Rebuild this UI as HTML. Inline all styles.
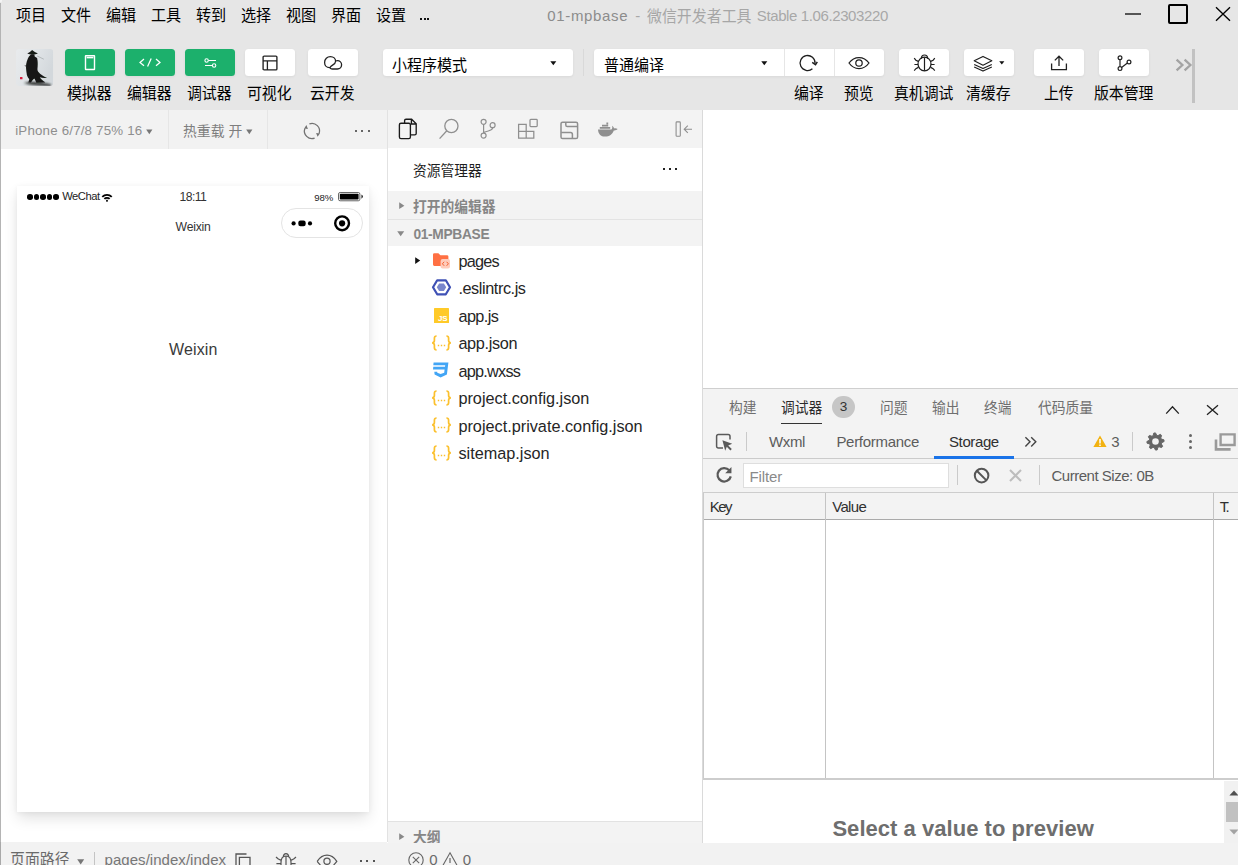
<!DOCTYPE html>
<html lang="zh"><head><meta charset="utf-8"><title>01-mpbase</title>
<style>
html,body{margin:0;padding:0;}
body{width:1238px;height:865px;overflow:hidden;position:relative;background:#fff;font-family:"Liberation Sans",sans-serif;}
.b{position:absolute;box-sizing:border-box;}
.c{position:absolute;display:block;overflow:visible;}
.t{position:absolute;white-space:pre;display:block;}
svg text{font-family:"Liberation Sans","Noto Sans CJK SC",sans-serif;}
</style></head><body>
<div class="b" style="left:0.00px;top:0.00px;width:1238.00px;height:110.00px;background:#e6e6e6;"></div>
<svg class="c" style="left:16.00px;top:7.05px;" width="30.20" height="15.70" viewBox="0 0 1924 1000" fill="#000" role="img" aria-label="项目"><text x="0" y="880" font-size="1000" textLength="1924" lengthAdjust="spacingAndGlyphs">项目</text></svg>
<svg class="c" style="left:61.00px;top:7.05px;" width="30.20" height="15.70" viewBox="0 0 1924 1000" fill="#000" role="img" aria-label="文件"><text x="0" y="880" font-size="1000" textLength="1924" lengthAdjust="spacingAndGlyphs">文件</text></svg>
<svg class="c" style="left:106.00px;top:7.05px;" width="30.20" height="15.70" viewBox="0 0 1924 1000" fill="#000" role="img" aria-label="编辑"><text x="0" y="880" font-size="1000" textLength="1924" lengthAdjust="spacingAndGlyphs">编辑</text></svg>
<svg class="c" style="left:151.00px;top:7.05px;" width="30.20" height="15.70" viewBox="0 0 1924 1000" fill="#000" role="img" aria-label="工具"><text x="0" y="880" font-size="1000" textLength="1924" lengthAdjust="spacingAndGlyphs">工具</text></svg>
<svg class="c" style="left:196.00px;top:7.05px;" width="30.20" height="15.70" viewBox="0 0 1924 1000" fill="#000" role="img" aria-label="转到"><text x="0" y="880" font-size="1000" textLength="1924" lengthAdjust="spacingAndGlyphs">转到</text></svg>
<svg class="c" style="left:241.00px;top:7.05px;" width="30.20" height="15.70" viewBox="0 0 1924 1000" fill="#000" role="img" aria-label="选择"><text x="0" y="880" font-size="1000" textLength="1924" lengthAdjust="spacingAndGlyphs">选择</text></svg>
<svg class="c" style="left:286.00px;top:7.05px;" width="30.20" height="15.70" viewBox="0 0 1924 1000" fill="#000" role="img" aria-label="视图"><text x="0" y="880" font-size="1000" textLength="1924" lengthAdjust="spacingAndGlyphs">视图</text></svg>
<svg class="c" style="left:331.00px;top:7.05px;" width="30.20" height="15.70" viewBox="0 0 1924 1000" fill="#000" role="img" aria-label="界面"><text x="0" y="880" font-size="1000" textLength="1924" lengthAdjust="spacingAndGlyphs">界面</text></svg>
<svg class="c" style="left:376.00px;top:7.05px;" width="30.20" height="15.70" viewBox="0 0 1924 1000" fill="#000" role="img" aria-label="设置"><text x="0" y="880" font-size="1000" textLength="1924" lengthAdjust="spacingAndGlyphs">设置</text></svg>
<div class="b" style="left:419.90px;top:18.30px;width:2.10px;height:2.10px;background:#111;"></div>
<div class="b" style="left:423.60px;top:18.30px;width:2.10px;height:2.10px;background:#111;"></div>
<div class="b" style="left:427.30px;top:18.30px;width:2.10px;height:2.10px;background:#111;"></div>
<span class="t" style="left:547.30px;top:8.00px;font-size:15.00px;line-height:15.00px;color:#8c8c8c;letter-spacing:0.644px;">01-mpbase</span>
<span class="t" style="left:635.30px;top:8.00px;font-size:15.00px;line-height:15.00px;color:#a8a8a8;">-</span>
<svg class="c" style="left:647.30px;top:7.80px;" width="104.51" height="15.60" viewBox="0 0 6699 1000" fill="#a6a6a6" role="img" aria-label="微信开发者工具"><text x="0" y="880" font-size="1000" textLength="6699" lengthAdjust="spacingAndGlyphs">微信开发者工具</text></svg>
<span class="t" style="left:756.80px;top:8.00px;font-size:15.00px;line-height:15.00px;color:#a8a8a8;letter-spacing:-0.387px;">Stable 1.06.2303220</span>
<div class="b" style="left:1125.00px;top:13.00px;width:16.20px;height:1.80px;background:#555;"></div>
<div class="b" style="left:1168.00px;top:4.00px;width:20.20px;height:20.20px;background:transparent;border:2px solid #000;border-radius:2px;"></div>
<svg class="c" style="left:1215.00px;top:6.00px;" width="16" height="16" viewBox="0 0 16 16"><path d="M1 1.2 L15 14.8 M15 1.2 L1 14.8" stroke="#000" stroke-width="1.35" fill="none"/></svg>
<svg class="c" style="left:15.60px;top:49.00px;" width="37.2" height="37" viewBox="0 0 37.2 37">
<defs><linearGradient id="avg" x1="0" y1="0" x2="1" y2="0.4"><stop offset="0" stop-color="#e9ebed"/><stop offset="0.55" stop-color="#dfe3e6"/><stop offset="1" stop-color="#d3d8dc"/></linearGradient>
<filter id="avb" x="-20%" y="-20%" width="140%" height="140%"><feGaussianBlur stdDeviation="0.5"/></filter>
<filter id="avb2" x="-20%" y="-20%" width="140%" height="140%"><feGaussianBlur stdDeviation="0.9"/></filter>
<clipPath id="avc"><rect width="37.2" height="37" rx="3.2"/></clipPath></defs>
<g clip-path="url(#avc)">
<rect width="37.2" height="37" fill="url(#avg)"/>
<path d="M7.8 34 C14 32 23 32.4 34.8 35.2 L35 37.2 C25 36.6 14 36.4 7.8 34 Z" fill="#1a1e1a" opacity="0.85" filter="url(#avb2)"/>
<g filter="url(#avb)">
<path d="M11.3 4.6 Q13.8 3.6 16.1 1 Q18.6 3.4 22 4.4 Q19 5.7 16.6 5.5 Q13.8 5.7 11.3 4.6 Z" fill="#171b17"/>
<path d="M15 5.2 L18.4 5.2 L18.7 7.4 L21.1 8.9 C21.8 12 21.9 15 21.6 18 C21.4 20 21.3 21.6 22.2 22.8 C24.5 25.6 27.5 27.6 31.1 28.9 C28 29.3 25.6 28.9 23.8 28.2 C25.2 30.2 27 31.8 29.4 33.6 L20.4 33.8 C19.6 32 18.9 30.6 18.3 29.6 C17 30.6 15.8 32 15 33.6 L12.3 33.6 C13 31.6 13.2 30.6 13.2 30 C11.6 28.4 10.8 26.4 10.6 24 C10.2 21 10 19 10 18.3 C10 16 10.4 14 10.8 12.6 C11.4 10.6 12.2 9 12.8 7.8 Z" fill="#141814"/>
<path d="M21.2 7 L27.8 10.2" stroke="#8a8f8f" stroke-width="0.5"/>
<path d="M8.8 16 L11 18.6" stroke="#333" stroke-width="0.7"/>
</g>
<rect x="4" y="27.9" width="2.5" height="2.3" rx="0.3" fill="#d81b3c"/>
</g></svg>
<div class="b" style="left:65.00px;top:49.00px;width:50.00px;height:27.00px;background:#1cb06c;border-radius:3.5px;box-shadow:0 1px 3px rgba(0,0,0,0.06);"></div>
<div class="b" style="left:125.00px;top:49.00px;width:50.00px;height:27.00px;background:#1cb06c;border-radius:3.5px;box-shadow:0 1px 3px rgba(0,0,0,0.06);"></div>
<div class="b" style="left:185.00px;top:49.00px;width:50.00px;height:27.00px;background:#1cb06c;border-radius:3.5px;box-shadow:0 1px 3px rgba(0,0,0,0.06);"></div>
<div class="b" style="left:245.00px;top:49.00px;width:50.00px;height:27.00px;background:#fff;border-radius:3.5px;box-shadow:0 1px 3px rgba(0,0,0,0.06);"></div>
<div class="b" style="left:308.00px;top:49.00px;width:50.00px;height:27.00px;background:#fff;border-radius:3.5px;box-shadow:0 1px 3px rgba(0,0,0,0.06);"></div>
<div class="b" style="left:899.00px;top:49.00px;width:50.00px;height:27.00px;background:#fff;border-radius:3.5px;box-shadow:0 1px 3px rgba(0,0,0,0.06);"></div>
<div class="b" style="left:964.00px;top:49.00px;width:50.00px;height:27.00px;background:#fff;border-radius:3.5px;box-shadow:0 1px 3px rgba(0,0,0,0.06);"></div>
<div class="b" style="left:1034.00px;top:49.00px;width:50.00px;height:27.00px;background:#fff;border-radius:3.5px;box-shadow:0 1px 3px rgba(0,0,0,0.06);"></div>
<div class="b" style="left:1099.00px;top:49.00px;width:50.00px;height:27.00px;background:#fff;border-radius:3.5px;box-shadow:0 1px 3px rgba(0,0,0,0.06);"></div>
<div class="b" style="left:383.00px;top:49.00px;width:190.00px;height:27.00px;background:#fff;border-radius:3.5px;box-shadow:0 1px 3px rgba(0,0,0,0.06);"></div>
<div class="b" style="left:594.00px;top:49.00px;width:290.00px;height:27.00px;background:#fff;border-radius:3.5px;box-shadow:0 1px 3px rgba(0,0,0,0.06);"></div>
<div class="b" style="left:784.00px;top:49.00px;width:1.00px;height:27.00px;background:#e6e6e6;"></div>
<div class="b" style="left:834.00px;top:49.00px;width:1.00px;height:27.00px;background:#e6e6e6;"></div>
<div class="b" style="left:583.00px;top:49.00px;width:1.00px;height:27.00px;background:#d9d9d9;"></div>
<svg class="c" style="left:84.00px;top:54.00px;" width="12" height="17" viewBox="0 0 12 17"><rect x="1.5" y="1.7" width="9" height="13.8" rx="0.3" fill="none" stroke="#fff" stroke-width="1.4"/><path d="M2.6 3.6 H9.4" stroke="#fff" stroke-width="1.5"/></svg>
<svg class="c" style="left:138.00px;top:57.00px;" width="24" height="11" viewBox="0 0 24 11"><path d="M6 2 L2 5.4 L6 8.8 M9.6 9.6 L13.2 1.6 M18 2 L22 5.4 L18 8.8" stroke="#fff" stroke-width="1.25" fill="none"/></svg>
<svg class="c" style="left:203.00px;top:57.00px;" width="16" height="12" viewBox="0 0 16 12"><circle cx="3.6" cy="3.5" r="1.7" fill="none" stroke="#fff" stroke-width="1.1"/><path d="M5.4 3.5 H13 M2 8.5 H9.4" stroke="#fff" stroke-width="1.1"/><circle cx="11.1" cy="8.5" r="1.7" fill="none" stroke="#fff" stroke-width="1.1"/></svg>
<svg class="c" style="left:262.00px;top:55.00px;" width="16" height="16" viewBox="0 0 16 16"><rect x="1.1" y="1.1" width="13.8" height="13.8" rx="1" fill="none" stroke="#222" stroke-width="1.35"/><path d="M1 5.8 H15 M5.4 5.8 V15" stroke="#222" stroke-width="1.3"/></svg>
<svg class="c" style="left:323.00px;top:55.00px;" width="20" height="15" viewBox="0 0 20 15"><path d="M6.6 12.6 C3.4 12.6 1.6 10.2 1.6 7.4 C1.6 4 4.2 1.6 7.4 1.6 C10.6 1.6 12.6 3.8 12.6 6.2 C12.6 9.6 8.4 10 7.2 12.2 C6.6 13.4 8.2 14 9.4 14 L14.4 14 C16.8 14 18.6 12.2 18.6 9.8 C18.6 7.6 16.8 5.6 14.4 5.6 C13.8 5.6 13.2 5.8 12.6 6" fill="none" stroke="#222" stroke-width="1.3" stroke-linecap="round"/></svg>
<svg class="c" style="left:392.20px;top:56.80px;" width="75.00" height="15.60" viewBox="0 0 4808 1000" fill="#000" role="img" aria-label="小程序模式"><text x="0" y="880" font-size="1000" textLength="4808" lengthAdjust="spacingAndGlyphs">小程序模式</text></svg>
<svg class="c" style="left:549.60px;top:60.80px;" width="7" height="5" viewBox="0 0 7 5"><path d="M0.3 0.3 H6.3 L3.3 4.3 Z" fill="#111"/></svg>
<svg class="c" style="left:603.80px;top:56.80px;" width="60.00" height="15.60" viewBox="0 0 3846 1000" fill="#000" role="img" aria-label="普通编译"><text x="0" y="880" font-size="1000" textLength="3846" lengthAdjust="spacingAndGlyphs">普通编译</text></svg>
<svg class="c" style="left:761.30px;top:60.80px;" width="7" height="5" viewBox="0 0 7 5"><path d="M0.3 0.3 H6.3 L3.3 4.3 Z" fill="#111"/></svg>
<svg class="c" style="left:799.00px;top:54.00px;" width="20" height="18" viewBox="0 0 20 18"><path d="M13.42 14.75 A7.5 7.5 0 1 1 16.07 9.4" fill="none" stroke="#1e1e1e" stroke-width="1.3"/><path d="M13.2 8.4 L16.5 10.6 L18.3 7.8" fill="none" stroke="#1e1e1e" stroke-width="1.5"/></svg>
<svg class="c" style="left:848.00px;top:56.00px;" width="22" height="14" viewBox="0 0 22 14"><path d="M1 7 C4 2.8 8 1.5 11 1.5 C14 1.5 18 2.8 21 7 C18 11.2 14 12.5 11 12.5 C8 12.5 4 11.2 1 7 Z" fill="none" stroke="#1e1e1e" stroke-width="1.25"/><circle cx="11" cy="7" r="3.2" fill="none" stroke="#1e1e1e" stroke-width="1.25"/></svg>
<svg class="c" style="left:913.00px;top:54.00px;" width="23" height="18" viewBox="0 0 23 18"><ellipse cx="11.5" cy="10" rx="6.5" ry="6.9" fill="none" stroke="#1e1e1e" stroke-width="1.25"/><path d="M11.5 3.4 V16.8 M8.3 4.6 C8.4 2.3 9.8 1 11.5 1 C13.2 1 14.6 2.3 14.7 4.6 M5.3 7.4 L2.9 6.2 L1.2 4.2 M17.7 7.4 L20.1 6.2 L21.8 4.2 M5 10.5 H1.4 M18 10.5 H21.6 M5.3 13.4 L2.9 14.7 L1.2 16.6 M17.7 13.4 L20.1 14.7 L21.8 16.6" fill="none" stroke="#1e1e1e" stroke-width="1.2"/></svg>
<svg class="c" style="left:973.00px;top:55.00px;" width="20" height="17" viewBox="0 0 20 17"><path d="M10 1.4 L18.8 5.8 L10 10.2 L1.2 5.8 Z M1.2 9.4 L10 13.6 L18.8 9.4 M1.2 11.9 L10 16.1 L18.8 11.9" fill="none" stroke="#1e1e1e" stroke-width="1.15" stroke-linejoin="round"/></svg>
<svg class="c" style="left:999.00px;top:60.50px;" width="6" height="4" viewBox="0 0 6 4"><path d="M0.2 0.2 H5.4 L2.8 3.4 Z" fill="#111"/></svg>
<svg class="c" style="left:1050.00px;top:55.00px;" width="18" height="16" viewBox="0 0 18 16"><path d="M9 11 V1.4 M4.8 5.4 L9 1.2 L13.2 5.4 M1.6 8.6 V14.6 H16.4 V8.6" fill="none" stroke="#222" stroke-width="1.3"/></svg>
<svg class="c" style="left:1116.00px;top:55.00px;" width="16" height="17" viewBox="0 0 16 17"><circle cx="4" cy="2.8" r="1.9" fill="none" stroke="#222" stroke-width="1.2"/><circle cx="4" cy="13.6" r="1.9" fill="none" stroke="#222" stroke-width="1.2"/><circle cx="13" cy="7" r="1.9" fill="none" stroke="#222" stroke-width="1.2"/><path d="M4 4.8 V11.6 M5.6 12.4 L11.4 8" fill="none" stroke="#222" stroke-width="1.2"/></svg>
<svg class="c" style="left:1175.00px;top:58.00px;" width="18" height="14" viewBox="0 0 18 14"><path d="M1.6 1.6 L7.4 7 L1.6 12.4 M9.6 1.6 L15.4 7 L9.6 12.4" fill="none" stroke="#a3a3a3" stroke-width="2.3"/></svg>
<div class="b" style="left:1192.00px;top:49.00px;width:2.60px;height:54.00px;background:#c2c2c2;"></div>
<svg class="c" style="left:67.42px;top:85.00px;" width="44.55" height="15.60" viewBox="0 0 2856 1000" fill="#000" role="img" aria-label="模拟器"><text x="0" y="880" font-size="1000" textLength="2856" lengthAdjust="spacingAndGlyphs">模拟器</text></svg>
<svg class="c" style="left:127.42px;top:85.00px;" width="44.55" height="15.60" viewBox="0 0 2856 1000" fill="#000" role="img" aria-label="编辑器"><text x="0" y="880" font-size="1000" textLength="2856" lengthAdjust="spacingAndGlyphs">编辑器</text></svg>
<svg class="c" style="left:187.42px;top:85.00px;" width="44.55" height="15.60" viewBox="0 0 2856 1000" fill="#000" role="img" aria-label="调试器"><text x="0" y="880" font-size="1000" textLength="2856" lengthAdjust="spacingAndGlyphs">调试器</text></svg>
<svg class="c" style="left:247.42px;top:85.00px;" width="44.55" height="15.60" viewBox="0 0 2856 1000" fill="#000" role="img" aria-label="可视化"><text x="0" y="880" font-size="1000" textLength="2856" lengthAdjust="spacingAndGlyphs">可视化</text></svg>
<svg class="c" style="left:310.43px;top:85.00px;" width="44.55" height="15.60" viewBox="0 0 2856 1000" fill="#000" role="img" aria-label="云开发"><text x="0" y="880" font-size="1000" textLength="2856" lengthAdjust="spacingAndGlyphs">云开发</text></svg>
<svg class="c" style="left:793.85px;top:85.00px;" width="29.70" height="15.60" viewBox="0 0 1904 1000" fill="#000" role="img" aria-label="编译"><text x="0" y="880" font-size="1000" textLength="1904" lengthAdjust="spacingAndGlyphs">编译</text></svg>
<svg class="c" style="left:843.85px;top:85.00px;" width="29.70" height="15.60" viewBox="0 0 1904 1000" fill="#000" role="img" aria-label="预览"><text x="0" y="880" font-size="1000" textLength="1904" lengthAdjust="spacingAndGlyphs">预览</text></svg>
<svg class="c" style="left:894.00px;top:85.00px;" width="59.40" height="15.60" viewBox="0 0 3808 1000" fill="#000" role="img" aria-label="真机调试"><text x="0" y="880" font-size="1000" textLength="3808" lengthAdjust="spacingAndGlyphs">真机调试</text></svg>
<svg class="c" style="left:966.43px;top:85.00px;" width="44.55" height="15.60" viewBox="0 0 2856 1000" fill="#000" role="img" aria-label="清缓存"><text x="0" y="880" font-size="1000" textLength="2856" lengthAdjust="spacingAndGlyphs">清缓存</text></svg>
<svg class="c" style="left:1043.85px;top:85.00px;" width="29.70" height="15.60" viewBox="0 0 1904 1000" fill="#000" role="img" aria-label="上传"><text x="0" y="880" font-size="1000" textLength="1904" lengthAdjust="spacingAndGlyphs">上传</text></svg>
<svg class="c" style="left:1094.00px;top:85.00px;" width="59.40" height="15.60" viewBox="0 0 3808 1000" fill="#000" role="img" aria-label="版本管理"><text x="0" y="880" font-size="1000" textLength="3808" lengthAdjust="spacingAndGlyphs">版本管理</text></svg>
<div class="b" style="left:0.00px;top:110.00px;width:387.00px;height:38.50px;background:#f2f2f2;"></div>
<div class="b" style="left:0.00px;top:148.50px;width:387.00px;height:694.00px;background:#fff;"></div>
<div class="b" style="left:0.00px;top:2.00px;width:1.00px;height:863.00px;background:#b4b4b4;"></div>
<div class="b" style="left:0.00px;top:0.00px;width:1.50px;height:2.50px;background:#f4f4f4;border-radius:0 0 2px 0;"></div>
<div class="b" style="left:387.00px;top:110.00px;width:1.00px;height:732.00px;background:#e2e2e2;"></div>
<span class="t" style="left:15.20px;top:124.04px;font-size:13.30px;line-height:13.30px;color:#8e8e8e;letter-spacing:0.195px;">iPhone 6/7/8 75% 16</span>
<svg class="c" style="left:146.00px;top:129.00px;" width="7" height="6" viewBox="0 0 7 6"><path d="M0.2 0.4 H6.4 L3.3 5.2 Z" fill="#777"/></svg>
<div class="b" style="left:168.00px;top:110.00px;width:1.00px;height:38.50px;background:#e6e6e6;"></div>
<svg class="c" style="left:183.00px;top:123.10px;" width="59.26" height="14.20" viewBox="0 0 4173 1000" fill="#7e7e7e" role="img" aria-label="热重载 开"><text x="0" y="880" font-size="1000" textLength="4173" lengthAdjust="spacingAndGlyphs" xml:space="preserve">热重载 开</text></svg>
<svg class="c" style="left:245.80px;top:129.00px;" width="7" height="6" viewBox="0 0 7 6"><path d="M0.2 0.4 H6.4 L3.3 5.2 Z" fill="#777"/></svg>
<div class="b" style="left:267.00px;top:110.00px;width:1.00px;height:38.50px;background:#e6e6e6;"></div>
<svg class="c" style="left:303.00px;top:122.00px;" width="18" height="18" viewBox="0 0 18 18"><path d="M6.4 1.86 A7.6 7.6 0 0 1 16.1 11.6 M11.6 16.14 A7.6 7.6 0 0 1 1.9 6.4" fill="none" stroke="#727272" stroke-width="1.3"/><path d="M13.1 10.9 L14.6 14.8 L16.9 11.4 Z M1.2 6.6 L3.4 3 L4.9 7.1 Z" fill="#727272"/></svg>
<div class="b" style="left:354.60px;top:130.20px;width:2.00px;height:2.00px;background:#666;"></div>
<div class="b" style="left:361.10px;top:130.20px;width:2.00px;height:2.00px;background:#666;"></div>
<div class="b" style="left:367.60px;top:130.20px;width:2.00px;height:2.00px;background:#666;"></div>
<div class="b" style="left:17.00px;top:185.50px;width:352.40px;height:626.20px;background:#fff;box-shadow:0 7px 14px -1px rgba(0,0,0,0.12),0 1px 5px rgba(0,0,0,0.05);"></div>
<div class="b" style="left:27.10px;top:194.20px;width:5.60px;height:5.60px;background:#000;border-radius:50%;"></div>
<div class="b" style="left:33.60px;top:194.20px;width:5.60px;height:5.60px;background:#000;border-radius:50%;"></div>
<div class="b" style="left:40.10px;top:194.20px;width:5.60px;height:5.60px;background:#000;border-radius:50%;"></div>
<div class="b" style="left:46.60px;top:194.20px;width:5.60px;height:5.60px;background:#000;border-radius:50%;"></div>
<div class="b" style="left:53.10px;top:194.20px;width:5.60px;height:5.60px;background:#000;border-radius:50%;"></div>
<span class="t" style="left:62.20px;top:191.12px;font-size:11.20px;line-height:11.20px;color:#222;letter-spacing:-0.451px;">WeChat</span>
<svg class="c" style="left:100.50px;top:192.60px;" width="12" height="9" viewBox="0 0 12 9"><path d="M0.6 3.2 A7.6 7.6 0 0 1 11.4 3.2 L10.1 4.5 A5.8 5.8 0 0 0 1.9 4.5 Z M2.7 5.3 A4.7 4.7 0 0 1 9.3 5.3 L8 6.6 A2.9 2.9 0 0 0 4 6.6 Z M6 6.6 A1.3 1.3 0 0 1 6 9.1 A1.3 1.3 0 0 1 6 6.6 Z" fill="#000"/></svg>
<span class="t" style="left:179.60px;top:190.57px;font-size:12.20px;line-height:12.20px;color:#333;letter-spacing:-0.581px;">18:11</span>
<span class="t" style="left:314.20px;top:192.87px;font-size:9.60px;line-height:9.60px;color:#222;letter-spacing:-0.107px;">98%</span>
<svg class="c" style="left:338.00px;top:191.80px;" width="25" height="9.4" viewBox="0 0 25 9.4"><rect x="0.5" y="0.5" width="21.4" height="8.3" rx="1.6" fill="none" stroke="#555" stroke-width="0.9"/><rect x="1.8" y="1.8" width="18.8" height="5.7" rx="0.8" fill="#000"/><path d="M23.5 2.6 Q26.3 4.65 23.5 6.7 Z" fill="#000"/></svg>
<span class="t" style="left:175.60px;top:220.57px;font-size:12.20px;line-height:12.20px;color:#333;letter-spacing:-0.217px;">Weixin</span>
<div class="b" style="left:280.60px;top:208.20px;width:82.20px;height:30.20px;background:#fff;border:1px solid #e4e4e4;border-radius:16px;"></div>
<svg class="c" style="left:290.00px;top:218.00px;" width="24" height="11" viewBox="0 0 24 11"><circle cx="3.6" cy="5.4" r="2.1" fill="#000"/><rect x="8.3" y="2.6" width="7.4" height="5.6" rx="2.2" fill="#000"/><circle cx="20" cy="5.4" r="2.1" fill="#000"/></svg>
<svg class="c" style="left:333.00px;top:214.00px;" width="18" height="18" viewBox="0 0 18 18"><circle cx="9.1" cy="9.3" r="6.9" fill="none" stroke="#000" stroke-width="2.4"/><circle cx="9.1" cy="9.3" r="3.1" fill="#000"/></svg>
<span class="t" style="left:168.90px;top:342.46px;font-size:16.00px;line-height:16.00px;color:#3a3a3a;letter-spacing:0.176px;">Weixin</span>
<div class="b" style="left:388.00px;top:110.00px;width:314.00px;height:38.00px;background:#f3f3f3;"></div>
<div class="b" style="left:388.00px;top:148.00px;width:314.00px;height:673.00px;background:#fff;"></div>
<div class="b" style="left:702.00px;top:110.00px;width:1.00px;height:733.00px;background:#dadada;"></div>
<svg class="c" style="left:398.00px;top:118.00px;" width="20" height="22" viewBox="0 0 20 22"><path d="M6.6 5.2 V2.6 Q6.6 1.2 8 1.2 H13.6 L18.2 5.8 V15.4 Q18.2 16.8 16.8 16.8 H12.4 M13.4 1.4 V6 H18" fill="none" stroke="#1a1a1a" stroke-width="1.35"/><rect x="1.4" y="5.2" width="11" height="15.4" rx="1.6" fill="none" stroke="#1a1a1a" stroke-width="1.35"/></svg>
<svg class="c" style="left:438.00px;top:118.00px;" width="22" height="22" viewBox="0 0 22 22"><circle cx="13.4" cy="8" r="6.6" fill="none" stroke="#8f8f8f" stroke-width="1.3"/><path d="M8.8 12.8 L1.6 20.6" stroke="#8f8f8f" stroke-width="1.3"/></svg>
<svg class="c" style="left:479.00px;top:118.00px;" width="18" height="22" viewBox="0 0 18 22"><circle cx="4.6" cy="3.8" r="2.5" fill="none" stroke="#8f8f8f" stroke-width="1.2"/><circle cx="4.6" cy="17.6" r="2.5" fill="none" stroke="#8f8f8f" stroke-width="1.2"/><circle cx="13.6" cy="7.2" r="2.5" fill="none" stroke="#8f8f8f" stroke-width="1.2"/><path d="M4.6 6.4 V15 M13.6 9.8 C13.6 13 9 12.4 5 14.4" fill="none" stroke="#8f8f8f" stroke-width="1.2"/></svg>
<svg class="c" style="left:517.00px;top:118.00px;" width="22" height="22" viewBox="0 0 22 22"><path d="M1.6 6.4 H9.2 V20.2 H1.6 Z M9.2 13.4 H16.8 V20.2 H9.2 M1.6 13.4 H9.2" fill="none" stroke="#8f8f8f" stroke-width="1.25"/><rect x="13" y="1.4" width="7.2" height="7.2" rx="0.8" fill="none" stroke="#8f8f8f" stroke-width="1.25"/></svg>
<svg class="c" style="left:560.00px;top:121.00px;" width="19" height="19" viewBox="0 0 19 19"><rect x="1" y="1.2" width="16.6" height="16.4" rx="1.6" fill="none" stroke="#8f8f8f" stroke-width="1.5"/><path d="M5.8 1.4 V4 Q5.8 5.6 7.4 5.6 H17.4 M1.2 11.6 H10.6 Q12.4 11.6 12.4 13.4 V17.4" fill="none" stroke="#8f8f8f" stroke-width="1.5"/></svg>
<svg class="c" style="left:597.00px;top:121.00px;" width="22" height="17" viewBox="0 0 22 17"><path d="M1 8.4 H14.4 C15.4 7.6 15.6 6.2 15 4.8 C16.2 5.4 16.8 6.4 17 7.4 C18.2 7 19.6 7.2 20.6 8 C19.6 9.2 18 9.6 16.8 9.4 C15.6 13 12.4 15.6 8 15.6 C3.6 15.6 1.2 12.6 1 8.4 Z" fill="#8f8f8f"/><path d="M2.8 6 H13.2 V7.8 H2.8 Z M5 3.8 H11.2 V5.6 H5 Z M9.4 1.4 H11.2 V3.4 H9.4 Z" fill="#8f8f8f"/></svg>
<svg class="c" style="left:675.00px;top:121.00px;" width="19" height="17" viewBox="0 0 19 17"><rect x="1.1" y="0.9" width="4.2" height="14.4" rx="0.8" fill="none" stroke="#8f8f8f" stroke-width="1.1"/><path d="M17 8.2 H9.2 M12.8 4.6 L9.2 8.2 L12.8 11.8" fill="none" stroke="#8f8f8f" stroke-width="1.1"/></svg>
<svg class="c" style="left:413.30px;top:163.05px;" width="68.75" height="14.30" viewBox="0 0 4808 1000" fill="#1e1e1e" role="img" aria-label="资源管理器"><text x="0" y="880" font-size="1000" textLength="4808" lengthAdjust="spacingAndGlyphs">资源管理器</text></svg>
<div class="b" style="left:662.60px;top:167.90px;width:2.00px;height:2.00px;background:#222;"></div>
<div class="b" style="left:668.95px;top:167.90px;width:2.00px;height:2.00px;background:#222;"></div>
<div class="b" style="left:675.30px;top:167.90px;width:2.00px;height:2.00px;background:#222;"></div>
<div class="b" style="left:388.00px;top:190.70px;width:314.00px;height:28.40px;background:#f3f3f3;"></div>
<div class="b" style="left:388.00px;top:219.00px;width:314.00px;height:0.70px;background:#e3e3e3;"></div>
<div class="b" style="left:388.00px;top:219.60px;width:314.00px;height:26.00px;background:#f3f3f3;"></div>
<svg class="c" style="left:399.00px;top:202.00px;" width="6" height="8" viewBox="0 0 6 8"><path d="M0.2 0.3 L5.4 3.7 L0.2 7.1 Z" fill="#888"/></svg>
<svg class="c" style="left:413.40px;top:199.05px;" width="82.50" height="14.30" viewBox="0 0 5769 1000" fill="#868686" role="img" aria-label="打开的编辑器"><text x="0" y="880" font-size="1000" font-weight="bold" textLength="5769" lengthAdjust="spacingAndGlyphs">打开的编辑器</text></svg>
<svg class="c" style="left:397.20px;top:231.00px;" width="8" height="6" viewBox="0 0 8 6"><path d="M0.2 0.2 H7.2 L3.7 5.2 Z" fill="#888"/></svg>
<span class="t" style="left:413.40px;top:227.86px;font-size:13.75px;line-height:13.75px;color:#868686;font-weight:bold;letter-spacing:-0.313px;">01-MPBASE</span>
<svg class="c" style="left:415.00px;top:256.60px;" width="6" height="8" viewBox="0 0 6 8"><path d="M0.2 0.2 L5.2 3.6 L0.2 7 Z" fill="#111"/></svg>
<span class="t" style="left:458.40px;top:252.54px;font-size:16.25px;line-height:16.25px;color:#262626;letter-spacing:-0.769px;">pages</span>
<span class="t" style="left:458.40px;top:280.04px;font-size:16.25px;line-height:16.25px;color:#262626;letter-spacing:-0.422px;">.eslintrc.js</span>
<span class="t" style="left:458.40px;top:307.54px;font-size:16.25px;line-height:16.25px;color:#262626;letter-spacing:-0.553px;">app.js</span>
<span class="t" style="left:458.40px;top:335.04px;font-size:16.25px;line-height:16.25px;color:#262626;letter-spacing:-0.334px;">app.json</span>
<span class="t" style="left:458.40px;top:362.54px;font-size:16.25px;line-height:16.25px;color:#262626;letter-spacing:-0.734px;">app.wxss</span>
<span class="t" style="left:458.40px;top:390.04px;font-size:16.25px;line-height:16.25px;color:#262626;">project.config.json</span>
<span class="t" style="left:458.40px;top:417.54px;font-size:16.25px;line-height:16.25px;color:#262626;">project.private.config.json</span>
<span class="t" style="left:458.40px;top:445.04px;font-size:16.25px;line-height:16.25px;color:#262626;">sitemap.json</span>
<svg class="c" style="left:432.00px;top:252.00px;" width="19" height="18" viewBox="0 0 19 18"><path d="M1 2.6 Q1 1.2 2.4 1.2 H6.4 L8.4 3.2 H15 Q16.4 3.2 16.4 4.6 V12.6 Q16.4 14 15 14 H2.4 Q1 14 1 12.6 Z" fill="#ff7043"/><rect x="8.6" y="7" width="9.4" height="9.6" rx="2" fill="#ffccbc"/><path d="M12.2 9.8 L10.4 11.8 L12.2 13.8 M14.6 9.8 L16.4 11.8 L14.6 13.8" fill="none" stroke="#f4511e" stroke-width="0.9"/></svg>
<svg class="c" style="left:431.50px;top:278.50px;" width="19" height="17" viewBox="0 0 19 17"><path d="M5.2 1.3 H13.8 L18 8.3 L13.8 15.3 H5.2 L1 8.3 Z" fill="#fff" stroke="#3f51b5" stroke-width="2.2" stroke-linejoin="round"/><path d="M7.1 4.5 H11.9 L14.2 8.3 L11.9 12.1 H7.1 L4.8 8.3 Z" fill="#7986cb"/></svg>
<div class="b" style="left:433.60px;top:307.50px;width:15.20px;height:15.00px;background:#ffca28;border-radius:0.6px;"></div>
<span class="t" style="left:437.90px;top:315.23px;font-size:8.00px;line-height:8.00px;color:#fff;font-weight:bold;letter-spacing:-0.185px;">JS</span>
<svg class="c" style="left:431.00px;top:334.50px;" width="21" height="16" viewBox="0 0 21 16"><path d="M5.6 1 Q3.4 1 3.4 3.2 V5.6 Q3.4 7.6 1.2 7.9 Q3.4 8.2 3.4 10.2 V12.8 Q3.4 15 5.6 15 M15.4 1 Q17.6 1 17.6 3.2 V5.6 Q17.6 7.6 19.8 7.9 Q17.6 8.2 17.6 10.2 V12.8 Q17.6 15 15.4 15" fill="none" stroke="#fbc02d" stroke-width="1.7"/><path d="M6.8 10.4 h1.4 M9.8 10.4 h1.4 M12.8 10.4 h1.4" stroke="#fbc02d" stroke-width="1.5"/></svg>
<svg class="c" style="left:431.00px;top:389.50px;" width="21" height="16" viewBox="0 0 21 16"><path d="M5.6 1 Q3.4 1 3.4 3.2 V5.6 Q3.4 7.6 1.2 7.9 Q3.4 8.2 3.4 10.2 V12.8 Q3.4 15 5.6 15 M15.4 1 Q17.6 1 17.6 3.2 V5.6 Q17.6 7.6 19.8 7.9 Q17.6 8.2 17.6 10.2 V12.8 Q17.6 15 15.4 15" fill="none" stroke="#fbc02d" stroke-width="1.7"/><path d="M6.8 10.4 h1.4 M9.8 10.4 h1.4 M12.8 10.4 h1.4" stroke="#fbc02d" stroke-width="1.5"/></svg>
<svg class="c" style="left:431.00px;top:417.00px;" width="21" height="16" viewBox="0 0 21 16"><path d="M5.6 1 Q3.4 1 3.4 3.2 V5.6 Q3.4 7.6 1.2 7.9 Q3.4 8.2 3.4 10.2 V12.8 Q3.4 15 5.6 15 M15.4 1 Q17.6 1 17.6 3.2 V5.6 Q17.6 7.6 19.8 7.9 Q17.6 8.2 17.6 10.2 V12.8 Q17.6 15 15.4 15" fill="none" stroke="#fbc02d" stroke-width="1.7"/><path d="M6.8 10.4 h1.4 M9.8 10.4 h1.4 M12.8 10.4 h1.4" stroke="#fbc02d" stroke-width="1.5"/></svg>
<svg class="c" style="left:431.00px;top:444.50px;" width="21" height="16" viewBox="0 0 21 16"><path d="M5.6 1 Q3.4 1 3.4 3.2 V5.6 Q3.4 7.6 1.2 7.9 Q3.4 8.2 3.4 10.2 V12.8 Q3.4 15 5.6 15 M15.4 1 Q17.6 1 17.6 3.2 V5.6 Q17.6 7.6 19.8 7.9 Q17.6 8.2 17.6 10.2 V12.8 Q17.6 15 15.4 15" fill="none" stroke="#fbc02d" stroke-width="1.7"/><path d="M6.8 10.4 h1.4 M9.8 10.4 h1.4 M12.8 10.4 h1.4" stroke="#fbc02d" stroke-width="1.5"/></svg>
<svg class="c" style="left:431.80px;top:362.00px;" width="17" height="16" viewBox="0 0 17 16"><path d="M1.6 0.6 H16.4 L14.9 12.6 L8.6 15.4 L2.6 12.6 L2.3 9.8 H5.2 L5.3 10.7 L8.6 12 L12.2 10.7 L12.6 7.4 H1 L1.3 4.8 H13 L13.2 3.2 H1.3 Z" fill="#42a5f5"/></svg>
<div class="b" style="left:388.00px;top:821.00px;width:314.00px;height:22.00px;background:#f3f3f3;border-top:1px solid #e2e2e2;"></div>
<svg class="c" style="left:399.00px;top:832.60px;" width="6" height="8" viewBox="0 0 6 8"><path d="M0.2 0.3 L5.4 3.7 L0.2 7.1 Z" fill="#888"/></svg>
<svg class="c" style="left:413.30px;top:829.10px;" width="27.50" height="14.20" viewBox="0 0 1937 1000" fill="#868686" role="img" aria-label="大纲"><text x="0" y="880" font-size="1000" font-weight="bold" textLength="1937" lengthAdjust="spacingAndGlyphs">大纲</text></svg>
<div class="b" style="left:703.00px;top:110.00px;width:535.00px;height:278.00px;background:#fff;"></div>
<div class="b" style="left:703.00px;top:388.00px;width:535.00px;height:455.00px;background:#fff;"></div>
<div class="b" style="left:703.00px;top:388.00px;width:535.00px;height:1.00px;background:#cfcfcf;"></div>
<div class="b" style="left:703.00px;top:389.00px;width:535.00px;height:104.00px;background:#f3f3f3;"></div>
<svg class="c" style="left:728.50px;top:400.15px;" width="27.50" height="14.30" viewBox="0 0 1923 1000" fill="#6f6f6f" role="img" aria-label="构建"><text x="0" y="880" font-size="1000" textLength="1923" lengthAdjust="spacingAndGlyphs">构建</text></svg>
<svg class="c" style="left:780.90px;top:400.15px;" width="41.25" height="14.30" viewBox="0 0 2885 1000" fill="#2a2a2a" role="img" aria-label="调试器"><text x="0" y="880" font-size="1000" textLength="2885" lengthAdjust="spacingAndGlyphs">调试器</text></svg>
<div class="b" style="left:781.00px;top:423.00px;width:41.40px;height:1.10px;background:#333;"></div>
<div class="b" style="left:832.00px;top:395.80px;width:22.60px;height:22.60px;background:#c6c6c6;border-radius:50%;"></div>
<span class="t" style="left:839.70px;top:400.49px;font-size:13.60px;line-height:13.60px;color:#333;">3</span>
<svg class="c" style="left:879.90px;top:400.15px;" width="27.50" height="14.30" viewBox="0 0 1923 1000" fill="#6f6f6f" role="img" aria-label="问题"><text x="0" y="880" font-size="1000" textLength="1923" lengthAdjust="spacingAndGlyphs">问题</text></svg>
<svg class="c" style="left:932.20px;top:400.15px;" width="27.50" height="14.30" viewBox="0 0 1923 1000" fill="#6f6f6f" role="img" aria-label="输出"><text x="0" y="880" font-size="1000" textLength="1923" lengthAdjust="spacingAndGlyphs">输出</text></svg>
<svg class="c" style="left:984.40px;top:400.15px;" width="27.50" height="14.30" viewBox="0 0 1923 1000" fill="#6f6f6f" role="img" aria-label="终端"><text x="0" y="880" font-size="1000" textLength="1923" lengthAdjust="spacingAndGlyphs">终端</text></svg>
<svg class="c" style="left:1037.50px;top:400.15px;" width="55.00" height="14.30" viewBox="0 0 3846 1000" fill="#6f6f6f" role="img" aria-label="代码质量"><text x="0" y="880" font-size="1000" textLength="3846" lengthAdjust="spacingAndGlyphs">代码质量</text></svg>
<svg class="c" style="left:1165.00px;top:405.00px;" width="15" height="10" viewBox="0 0 15 10"><path d="M1.2 8.6 L7.5 1.8 L13.8 8.6" fill="none" stroke="#222" stroke-width="1.3"/></svg>
<svg class="c" style="left:1206.00px;top:404.00px;" width="13" height="12" viewBox="0 0 13 12"><path d="M1 1.2 L12 10.8 M12 1.2 L1 10.8" fill="none" stroke="#222" stroke-width="1.3"/></svg>
<div class="b" style="left:703.00px;top:458.30px;width:535.00px;height:1.00px;background:#cbcbcb;"></div>
<svg class="c" style="left:715.00px;top:432.50px;" width="19" height="18" viewBox="0 0 19 18"><path d="M8 15 H3.4 Q1.6 15 1.6 13.2 V3.4 Q1.6 1.6 3.4 1.6 H13.2 Q15 1.6 15 3.4 V6.4" fill="none" stroke="#5a5a5a" stroke-width="1.5"/><path d="M7.4 7.2 L17.2 10.8 L13.2 12.4 L16.8 16 L15.4 17.4 L11.8 13.8 L10.2 17.8 Z" fill="#5a5a5a"/></svg>
<div class="b" style="left:746.30px;top:431.50px;width:1.00px;height:19.00px;background:#cacaca;"></div>
<span class="t" style="left:769.00px;top:434.20px;font-size:15.00px;line-height:15.00px;color:#5c5c5c;letter-spacing:-0.362px;">Wxml</span>
<span class="t" style="left:836.40px;top:434.20px;font-size:15.00px;line-height:15.00px;color:#5c5c5c;letter-spacing:-0.287px;">Performance</span>
<span class="t" style="left:949.00px;top:434.20px;font-size:15.00px;line-height:15.00px;color:#303030;letter-spacing:-0.390px;">Storage</span>
<div class="b" style="left:934.00px;top:456.00px;width:80.00px;height:3.00px;background:#1a73e8;"></div>
<svg class="c" style="left:1024.00px;top:435.50px;" width="14" height="12" viewBox="0 0 14 12"><path d="M1.4 1.2 L6 5.8 L1.4 10.4 M7.2 1.2 L11.8 5.8 L7.2 10.4" fill="none" stroke="#444" stroke-width="1.4"/></svg>
<svg class="c" style="left:1092.50px;top:434.50px;" width="14" height="12.5" viewBox="0 0 14 12.5"><path d="M7 0.6 L13.6 12 H0.4 Z" fill="#f2b211"/><path d="M7 4 V8.4 M7 9.4 V11" stroke="#fff" stroke-width="1.5"/></svg>
<span class="t" style="left:1111.20px;top:434.20px;font-size:15.00px;line-height:15.00px;color:#5c5c5c;">3</span>
<div class="b" style="left:1131.60px;top:431.50px;width:1.00px;height:19.00px;background:#cacaca;"></div>
<svg class="c" style="left:1146.00px;top:431.50px;" width="19" height="19" viewBox="0 0 19 19"><path d="M17.93 7.82 L18.10 9.50 L15.68 10.73 L15.32 11.91 L16.65 14.28 L15.58 15.58 L13.00 14.74 L11.91 15.32 L11.18 17.93 L9.50 18.10 L8.27 15.68 L7.09 15.32 L4.72 16.65 L3.42 15.58 L4.26 13.00 L3.68 11.91 L1.07 11.18 L0.90 9.50 L3.32 8.27 L3.68 7.09 L2.35 4.72 L3.42 3.42 L6.00 4.26 L7.09 3.68 L7.82 1.07 L9.50 0.90 L10.73 3.32 L11.91 3.68 L14.28 2.35 L15.58 3.42 L14.74 6.00 L15.32 7.09 Z" fill="#666" stroke="#666" stroke-width="1" stroke-linejoin="round"/><circle cx="9.5" cy="9.5" r="3.3" fill="#f3f3f3"/></svg>
<div class="b" style="left:1189.40px;top:434.30px;width:3.10px;height:3.10px;background:#666;border-radius:50%;"></div>
<div class="b" style="left:1189.40px;top:440.00px;width:3.10px;height:3.10px;background:#666;border-radius:50%;"></div>
<div class="b" style="left:1189.40px;top:445.70px;width:3.10px;height:3.10px;background:#666;border-radius:50%;"></div>
<svg class="c" style="left:1213.50px;top:432.50px;" width="23" height="19" viewBox="0 0 23 19"><path d="M6.6 1.4 H20.6 V12 H6.6 Z" fill="none" stroke="#9a9a9a" stroke-width="2.4"/><path d="M2 6.6 V16.4 H16.6" fill="none" stroke="#9a9a9a" stroke-width="2.6"/></svg>
<div class="b" style="left:703.00px;top:492.00px;width:535.00px;height:1.20px;background:#cdcdcd;"></div>
<svg class="c" style="left:714.60px;top:465.60px;" width="18.4" height="18.4" viewBox="0 0 17 17"><path d="M13.2 4 A6.2 6.2 0 1 0 14.6 9.6" fill="none" stroke="#5a5a5a" stroke-width="2.1"/><path d="M15.2 1 V6.8 H9.4 Z" fill="#5a5a5a"/></svg>
<div class="b" style="left:743.30px;top:462.60px;width:205.50px;height:25.00px;background:#fff;border:1px solid #dedede;"></div>
<span class="t" style="left:749.60px;top:469.00px;font-size:15.00px;line-height:15.00px;color:#8a8a8a;letter-spacing:-0.147px;">Filter</span>
<div class="b" style="left:957.20px;top:465.00px;width:1.00px;height:20.00px;background:#cacaca;"></div>
<svg class="c" style="left:972.60px;top:467.00px;" width="18" height="18" viewBox="0 0 18 18"><circle cx="8.6" cy="8.6" r="6.8" fill="none" stroke="#555" stroke-width="2"/><path d="M3.8 3.8 L13.4 13.4" stroke="#555" stroke-width="2"/></svg>
<svg class="c" style="left:1009.00px;top:469.00px;" width="13" height="13" viewBox="0 0 13 13"><path d="M1 1 L12 12 M12 1 L1 12" stroke="#bdbdbd" stroke-width="2.1" fill="none"/></svg>
<div class="b" style="left:1038.60px;top:465.00px;width:1.00px;height:20.00px;background:#cacaca;"></div>
<span class="t" style="left:1051.50px;top:468.10px;font-size:15.00px;line-height:15.00px;color:#5c5c5c;letter-spacing:-0.483px;">Current Size: 0B</span>
<div class="b" style="left:703.00px;top:493.20px;width:535.00px;height:25.40px;background:#f3f3f3;"></div>
<div class="b" style="left:703.00px;top:518.60px;width:535.00px;height:1.00px;background:#aaaaaa;"></div>
<div class="b" style="left:703.00px;top:493.20px;width:1.00px;height:286.00px;background:#cbcbcb;"></div>
<div class="b" style="left:825.00px;top:493.20px;width:1.00px;height:286.00px;background:#c4c4c4;"></div>
<div class="b" style="left:1213.20px;top:493.20px;width:1.00px;height:286.00px;background:#c4c4c4;"></div>
<span class="t" style="left:709.80px;top:499.30px;font-size:15.00px;line-height:15.00px;color:#303030;letter-spacing:-1.624px;">Key</span>
<span class="t" style="left:832.20px;top:499.30px;font-size:15.00px;line-height:15.00px;color:#303030;letter-spacing:-0.663px;">Value</span>
<span class="t" style="left:1219.80px;top:499.30px;font-size:15.00px;line-height:15.00px;color:#303030;letter-spacing:-1.767px;">T.</span>
<div class="b" style="left:703.00px;top:778.40px;width:535.00px;height:2.00px;background:#cdcdcd;"></div>
<span class="t" style="left:832.40px;top:817.58px;font-size:22.00px;line-height:22.00px;color:#6e6e6e;font-weight:bold;letter-spacing:0.039px;">Select a value to preview</span>
<div class="b" style="left:1224.00px;top:781.00px;width:14.00px;height:62.00px;background:#f1f1f1;"></div>
<svg class="c" style="left:1229.00px;top:789.50px;" width="10" height="6" viewBox="0 0 10 6"><path d="M0.4 5.6 L5 0.4 L9.6 5.6 Z" fill="#505050"/></svg>
<div class="b" style="left:1226.20px;top:802.20px;width:12.00px;height:19.80px;background:#c1c1c1;"></div>
<svg class="c" style="left:1229.00px;top:829.00px;" width="10" height="6" viewBox="0 0 10 6"><path d="M0.4 0.4 L5 5.4 L9.6 0.4 Z" fill="#a3a3a3"/></svg>
<div class="b" style="left:0.00px;top:843.00px;width:1238.00px;height:22.00px;background:#f2f2f2;"></div>
<div class="b" style="left:0.00px;top:842.00px;width:387.00px;height:2.00px;background:#f2f2f2;"></div>
<div class="b" style="left:0.00px;top:842.00px;width:1.20px;height:23.00px;background:#a9a9a9;"></div>
<svg class="c" style="left:10.00px;top:851.35px;" width="59.60" height="15.90" viewBox="0 0 3748 1000" fill="#6a6a6a" role="img" aria-label="页面路径"><text x="0" y="880" font-size="1000" textLength="3748" lengthAdjust="spacingAndGlyphs">页面路径</text></svg>
<svg class="c" style="left:76.60px;top:859.00px;" width="8" height="6" viewBox="0 0 8 6"><path d="M0.2 0.3 H7.2 L3.7 5.4 Z" fill="#777"/></svg>
<div class="b" style="left:93.80px;top:852.00px;width:1.00px;height:13.00px;background:#c4c4c4;"></div>
<span class="t" style="left:104.60px;top:851.60px;font-size:15.00px;line-height:15.00px;color:#777;letter-spacing:0.036px;">pages/index/index</span>
<svg class="c" style="left:235.00px;top:853.00px;" width="16" height="12" viewBox="0 0 16 12"><path d="M1 12 V1 H11.5 M4.4 12 V4.4 H15 V12" fill="none" stroke="#555" stroke-width="1.3"/></svg>
<svg class="c" style="left:274.00px;top:852.00px;" width="24" height="13" viewBox="0 0 24 13"><path d="M12 4 C15.4 4 17 7 17 10.6 V13 M12 4 C8.6 4 7 7 7 10.6 V13 M12 4.2 V13 M9.2 5 C9.4 3 10.4 1.6 12 1.6 C13.6 1.6 14.6 3 14.8 5 M7.2 8.6 L4 6.8 L2 5 M16.8 8.6 L20 6.8 L22 5 M7 11.6 H2.4 M17 11.6 H21.6" fill="none" stroke="#555" stroke-width="1.2"/></svg>
<svg class="c" style="left:316.00px;top:854.00px;" width="22" height="11" viewBox="0 0 22 11"><path d="M1.2 7.4 C4.4 2.6 8.2 1.2 11 1.2 C13.8 1.2 17.6 2.6 20.8 7.4 C19.8 8.8 18.8 10 17.6 11 M1.2 7.4 C2.2 8.8 3.2 10 4.4 11" fill="none" stroke="#555" stroke-width="1.2"/><circle cx="11" cy="7.2" r="3.1" fill="none" stroke="#555" stroke-width="1.2"/></svg>
<div class="b" style="left:360.00px;top:860.00px;width:2.00px;height:2.00px;background:#555;"></div>
<div class="b" style="left:366.30px;top:860.00px;width:2.00px;height:2.00px;background:#555;"></div>
<div class="b" style="left:372.60px;top:860.00px;width:2.00px;height:2.00px;background:#555;"></div>
<svg class="c" style="left:408.00px;top:852.00px;" width="16" height="13" viewBox="0 0 16 13"><circle cx="8" cy="8" r="7.2" fill="none" stroke="#666" stroke-width="1.1"/><path d="M4.8 4.8 L11.2 11.2 M11.2 4.8 L4.8 11.2" stroke="#666" stroke-width="1.1"/></svg>
<span class="t" style="left:429.20px;top:851.90px;font-size:15.00px;line-height:15.00px;color:#6a6a6a;">0</span>
<svg class="c" style="left:442.00px;top:852.00px;" width="16" height="13" viewBox="0 0 16 13"><path d="M8 0.8 L15.4 14 H0.6 Z" fill="none" stroke="#666" stroke-width="1.1"/><path d="M8 6 V11" stroke="#666" stroke-width="1.2"/></svg>
<span class="t" style="left:462.80px;top:851.90px;font-size:15.00px;line-height:15.00px;color:#6a6a6a;">0</span>
</body></html>
